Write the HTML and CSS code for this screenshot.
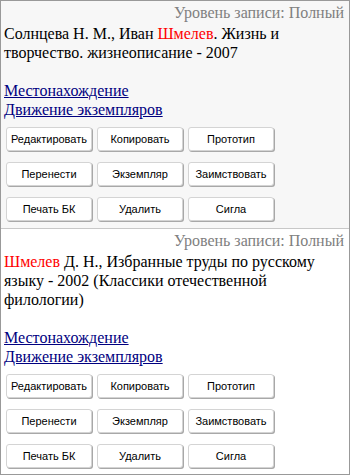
FILE: index.html
```html
<!DOCTYPE html>
<html lang="ru">
<head>
<meta charset="utf-8">
<link rel="stylesheet" href="styles.css">
</head>
<body>
<div class="list">
  <div class="record record-alt">
    <div class="level">Уровень записи: Полный</div>
    <div class="desc">Солнцева Н. М., Иван <span class="hl">Шмелев</span>. Жизнь и творчество. жизнеописание - 2007</div>
    <div class="links">
      <a href="#">Местонахождение</a><br>
      <a href="#">Движение экземпляров</a>
    </div>
    <div class="actions">
      <button class="btn">Редактировать</button>
      <button class="btn">Копировать</button>
      <button class="btn">Прототип</button>
      <button class="btn">Перенести</button>
      <button class="btn">Экземпляр</button>
      <button class="btn">Заимствовать</button>
      <button class="btn">Печать БК</button>
      <button class="btn">Удалить</button>
      <button class="btn">Сигла</button>
    </div>
  </div>
  <div class="record">
    <div class="level">Уровень записи: Полный</div>
    <div class="desc"><span class="hl">Шмелев</span> Д. Н., Избранные труды по русскому языку - 2002 (Классики отечественной филологии)</div>
    <div class="links">
      <a href="#">Местонахождение</a><br>
      <a href="#">Движение экземпляров</a>
    </div>
    <div class="actions">
      <button class="btn">Редактировать</button>
      <button class="btn">Копировать</button>
      <button class="btn">Прототип</button>
      <button class="btn">Перенести</button>
      <button class="btn">Экземпляр</button>
      <button class="btn">Заимствовать</button>
      <button class="btn">Печать БК</button>
      <button class="btn">Удалить</button>
      <button class="btn">Сигла</button>
    </div>
  </div>
</div>
</body>
</html>
```
FILE: styles.css
```css
* { box-sizing: border-box; }
html, body { margin: 0; padding: 0; background: #fff; }
body {
  font-family: "Liberation Serif", "Times New Roman", serif;
  font-size: 16px;
  line-height: 19px;
  color: #000;
}
.list {
  width: 350px;
  height: 475px;
  border: 1px solid #999;
  overflow: hidden;
}
.record {
  padding: 2px 5px 7px 3px;
  background: #fff;
}
.record-alt {
  background: #f7f7f7;
  border-bottom: 1px solid #c8c8c8;
}
.level {
  text-align: right;
  color: #808080;
  margin-bottom: 2px;
}
.hl { color: #ff0000; }
.links { margin-top: 19px; }
.links a { color: #000080; text-decoration: underline; }
.actions {
  display: grid;
  grid-template-columns: repeat(3, 86px);
  column-gap: 5px;
  row-gap: 11px;
  margin: 8px 0 0 2px;
}
.btn {
  height: 24px;
  padding: 0;
  font-family: "Liberation Sans", Arial, sans-serif;
  font-size: 11px;
  color: #000;
  background: #fff;
  border: 1px solid #d4d4d4;
  border-radius: 3px;
  box-shadow: 1px 1px 0 #a8a8a8;
}
```
